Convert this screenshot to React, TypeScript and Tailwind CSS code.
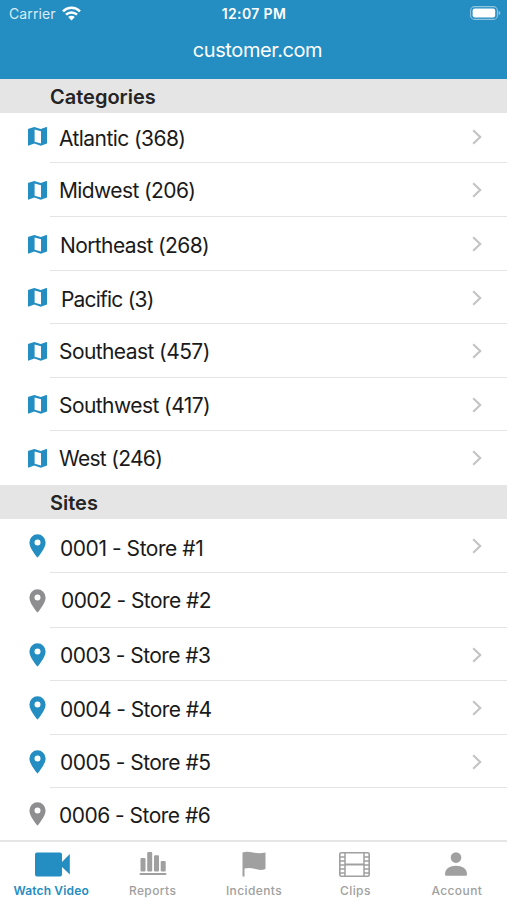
import { ReactNode } from "react";

interface RowProps {
    label: string;
    row: string;
    text: string;
    disabled?: boolean;
}

const categories: RowProps[] = [
    { label: 'Atlantic (368)', row: 'h-[50px] pb-[3px]', text: 'ml-[11px] top-[2px] tracking-[-0.57px]' },
    { label: 'Midwest (206)', row: 'h-[54px]', text: 'ml-[11px] top-[1px] tracking-[-0.6px]' },
    { label: 'Northeast (268)', row: 'h-[54px]', text: 'ml-[12px] top-[2px] tracking-[-0.6px]' },
    { label: 'Pacific (3)', row: 'h-[53px]', text: 'ml-[13px] top-[2px] tracking-[-0.8px]' },
    { label: 'Southeast (457)', row: 'h-[54px]', text: 'ml-[11px] top-[1px] tracking-[-0.58px]' },
    { label: 'Southwest (417)', row: 'h-[53px]', text: 'ml-[11px] top-[1px] tracking-[-0.56px]' },
    { label: 'West (246)', row: 'h-[54px]', text: 'ml-[11px] top-[1px] tracking-[-0.7px]' },
]

const sites: RowProps[] = [
    { label: '0001 - Store #1', row: 'h-[54px]', text: 'ml-[12px] top-[3px] tracking-[-0.45px]' },
    { label: '0002 - Store #2', row: 'h-[55px]', text: 'ml-[13px] tracking-[-0.58px]', disabled: true },
    { label: '0003 - Store #3', row: 'h-[53px]', text: 'ml-[12px] top-[1px] tracking-[-0.56px]' },
    { label: '0004 - Store #4', row: 'h-[54px]', text: 'ml-[12px] top-[2px] tracking-[-0.58px]' },
    { label: '0005 - Store #5', row: 'h-[53px]', text: 'ml-[12px] top-[1px] tracking-[-0.54px]' },
    { label: '0006 - Store #6', row: 'h-[52px]', text: 'ml-[11px] top-[2px] tracking-[-0.52px]', disabled: true },
]

function MapIcon() {
    return (
        <svg width="19" height="19" viewBox="0 0 19 19" className="shrink-0">
            <path fill="#248dc1" fillRule="evenodd" d="M.6 1.8 6.3 0 12.8 2 18.3.1Q19 0 19 .7V16.4L12.8 18.7 6.3 16.6.8 18.6Q0 18.9 0 18.1V2.6Q0 2 .6 1.8ZM6.6 2.4V14.7L13 16.6V4.2Z" />
        </svg>
    )
}

function PinIcon({ disabled }: { disabled?: boolean }) {
    return (
        <svg width="17" height="24" viewBox="0 0 17 24" className="shrink-0">
            <path fill={disabled ? '#8e8e90' : '#248dc1'} fillRule="evenodd" d="M8.5.3A8.1 8.1 0 0 0 .4 8.4C.4 14.4 8.5 23.6 8.5 23.6S16.6 14.4 16.6 8.4A8.1 8.1 0 0 0 8.5.3ZM8.5 5.6A3 3 0 1 1 8.5 11.6A3 3 0 1 1 8.5 5.6Z" />
        </svg>
    )
}

function Chevron() {
    return (
        <svg width="10" height="16" viewBox="0 0 10 16" className="mr-[25px]">
            <path d="M1.2 1.2 8.2 8 1.2 14.8" fill="none" stroke="#c4c4c6" strokeWidth="2.2" />
        </svg>
    )
}

function SectionHeader({ title }: { title: string }) {
    return (
        <div className="h-[34px] bg-[#e5e5e5] pl-[50px] flex items-center">
            <h2 className="text-[20px] leading-6 font-semibold text-[#242424] relative top-[1px]">{title}</h2>
        </div>
    )
}

function Row({ data, icon, last }: { data: RowProps; icon: ReactNode; last?: boolean }) {
    return (
        <li className={`relative flex items-center ${data.row}`}>
            <div className="w-[47px] mr-px flex justify-end">{icon}</div>
            <span className={`relative flex-1 text-[21px] leading-7 text-[#1a1a1a] whitespace-nowrap ${data.text}`}>{data.label}</span>
            {!data.disabled && <Chevron />}
            {!last && <div className="absolute left-[50px] right-0 bottom-0 h-px bg-[#e4e4e5]" />}
        </li>
    )
}

function Tab({ title, active, children }: { title: string; active?: boolean; children: ReactNode }) {
    return (
        <div className={`flex-1 flex flex-col items-center ${active ? 'text-[#248dc1]' : 'text-[#a0a0a0]'}`}>
            <div className="h-[32px] mt-[6px] flex items-center">{children}</div>
            <span className={`text-[12px] leading-4 mt-[3px] ml-px ${active ? 'font-semibold tracking-[0.15px]' : 'font-medium tracking-[0.4px]'}`}>{title}</span>
        </div>
    )
}

export default function App() {
    return (
        <div className="w-[507px] h-[900px] bg-white flex flex-col overflow-hidden font-['Inter',sans-serif]">
            <header className="h-[79px] bg-[#248dc1] text-white shrink-0">
                <div className="h-7 grid grid-cols-3 items-center pl-[9px] pr-[7px] text-[14px] leading-5">
                    <div className="flex items-center gap-[6px]">
                        <span className="text-[#d9ecf6] tracking-[0.1px]">Carrier</span>
                        <svg width="19" height="15" viewBox="0 0 19 15" className="relative -top-px">
                            <g fill="none" stroke="white" strokeWidth="2.5">
                                <path d="M1 5.3A12.2 12.2 0 0 1 18 5.3" />
                                <path d="M4 8.7A7.8 7.8 0 0 1 15 8.7" />
                            </g>
                            <path fill="white" d="M9.5 14.5 6.2 11.1A4.7 4.7 0 0 1 12.8 11.1Z" />
                        </svg>
                    </div>
                    <span className="text-center font-semibold tracking-[0.35px] -ml-px">12:07 PM</span>
                    <svg width="31" height="14" viewBox="0 0 31 14" className="justify-self-end relative -top-px left-px">
                        <rect x=".6" y=".6" width="26.8" height="12.8" rx="4" fill="none" stroke="#8fc5e0" strokeWidth="1.1" />
                        <rect x="2.6" y="2.4" width="22.6" height="9.2" rx="2" fill="white" />
                        <path d="M28.6 4.8Q30.4 5.6 30.4 7T28.6 9.2Z" fill="#8fc5e0" />
                    </svg>
                </div>
                <h1 className="text-center text-[20px] leading-6 mt-[10px] ml-2 tracking-[-0.4px]">customer.com</h1>
            </header>
            <main className="flex-1">
                <SectionHeader title="Categories" />
                <ul>
                    {categories.map((item, index) => (
                        <Row key={item.label} data={item} icon={<MapIcon />} last={index === categories.length - 1} />
                    ))}
                </ul>
                <SectionHeader title="Sites" />
                <ul>
                    {sites.map((item, index) => (
                        <Row
                            key={item.label}
                            data={item}
                            icon={<div className="mr-[1px]"><PinIcon disabled={item.disabled} /></div>}
                            last={index === sites.length - 1}
                        />
                    ))}
                </ul>
            </main>
            <nav className="h-[61px] border-t-2 border-[#e6e6e6] flex shrink-0">
                <Tab title="Watch Video" active>
                    <svg width="36" height="25" viewBox="0 0 36 25" className="ml-[5px]" fill="currentColor">
                        <path d="M2 .5H25Q27 .5 27 2.5V10L34.8 2V22.5L27 15V22.5Q27 24.5 25 24.5H2Q0 24.5 0 22.5V2.5Q0 .5 2 .5Z" />
                    </svg>
                </Tab>
                <Tab title="Reports">
                    <svg width="28" height="24" viewBox="0 0 28 24" className="ml-px" fill="currentColor">
                        <rect x="1.5" y="6" width="5" height="13.5" rx="1" />
                        <rect x="8.2" y="0" width="5" height="19.5" rx="1" />
                        <rect x="15" y="3.2" width="5" height="16.3" rx="1" />
                        <rect x="21.7" y="9" width="5" height="10.5" rx="1" />
                        <rect x=".5" y="21" width="27" height="2" rx="1" />
                    </svg>
                </Tab>
                <Tab title="Incidents">
                    <svg width="24" height="26" viewBox="0 0 24 26" className="ml-px" fill="currentColor">
                        <path d="M.5 1.5Q5-.2 11 1.6 17 3 23.5 1.6V18Q18.5 20 12.5 17.8 7 16.2 2.5 17.6V25.5H.5Z" />
                    </svg>
                </Tab>
                <Tab title="Clips">
                    <svg width="31" height="25" viewBox="0 0 31 25" fill="none" stroke="currentColor">
                        <rect x=".8" y=".8" width="29.4" height="23.4" rx="1.5" strokeWidth="1.6" />
                        <path strokeWidth="1.5" d="M6 1V24M25 1V24" />
                        <path strokeWidth="2" d="M6 12.5H25" />
                        <path strokeWidth="1.3" d="M1 5H6M1 9H6M1 13H6M1 17H6M1 21H6M25 5H30M25 9H30M25 13H30M25 17H30M25 21H30" />
                    </svg>
                </Tab>
                <Tab title="Account">
                    <svg width="22" height="24" viewBox="0 0 22 24" fill="currentColor">
                        <circle cx="11" cy="5.6" r="5.3" />
                        <path d="M0 22.5C0 16.5 5 13.8 11 13.8S22 16.5 22 22.5Q22 23.7 20.8 23.7H1.2Q0 23.7 0 22.5Z" />
                    </svg>
                </Tab>
            </nav>
        </div>
    )
}
